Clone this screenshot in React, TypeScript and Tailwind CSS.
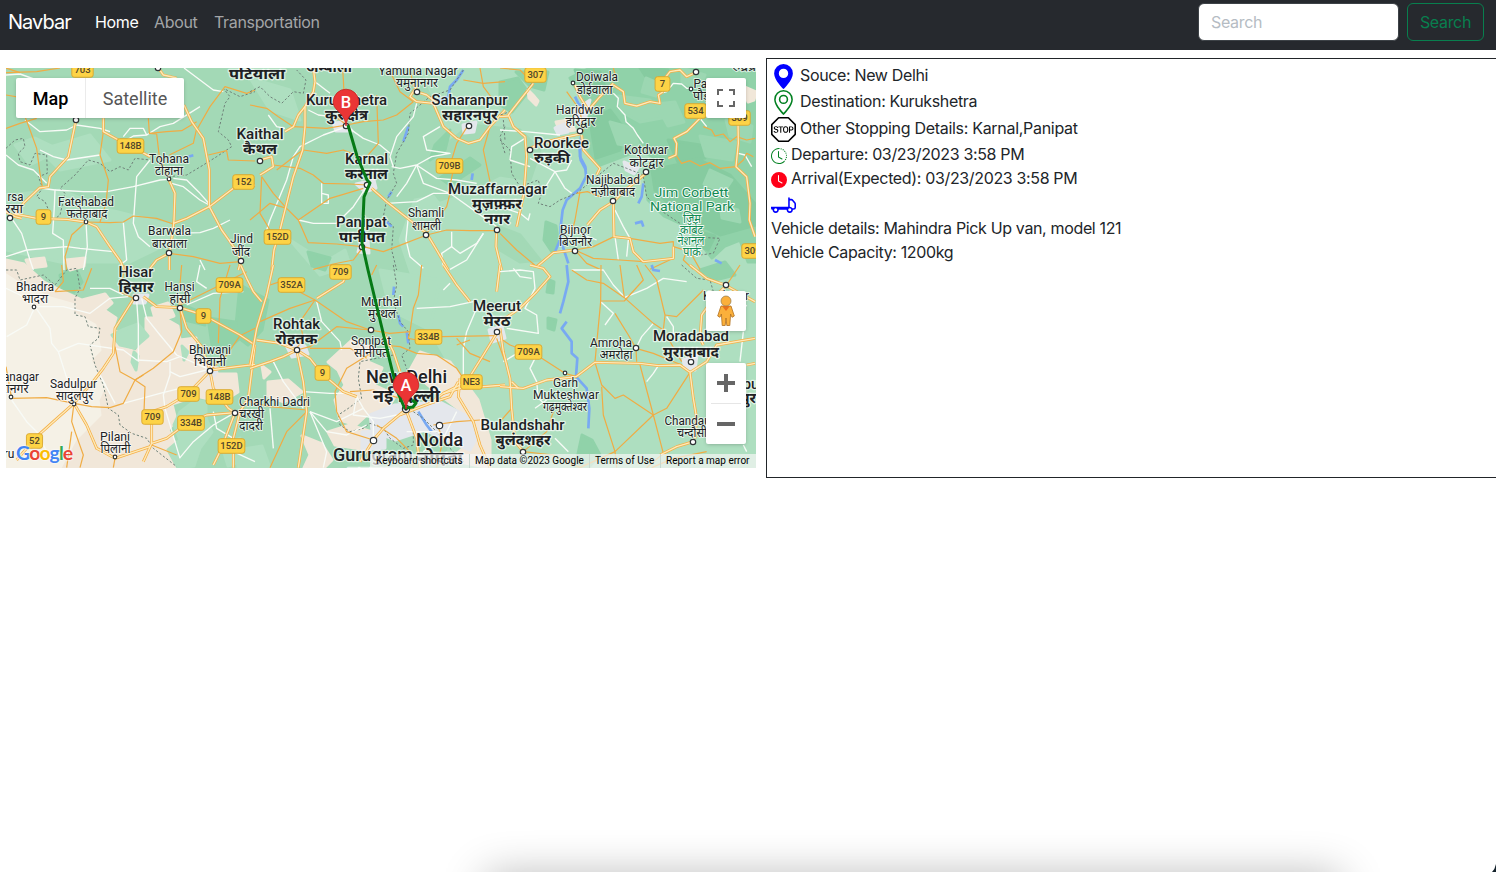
import React from "react";
import { BsClockFill, BsClockHistory, BsGeoAlt, BsGeoAltFill, BsSignStop, BsTruckFlatbed } from "react-icons/bs";

/* ---------- map data ---------- */

type Tile = {
  x: number;
  y: number;
  highways: string[];
  roads: string[];
  lanes: string[];
  borders: string[];
  water: string[];
};

// Each tile is digitised at three units per map pixel.
const tiles: Tile[] = [
  {
    x: 0,
    y: 60,
    highways: [
      "M310 175 L310 215 L355 240 L400 262 L450 290",
      "M505 355 L525 400 L522 480 L518 520 L508 580 L508 630",
      "M552 135 L575 185 L610 235 L628 330 L628 440 L665 510 L715 580 L722 605 L715 630",
      "M628 440 L700 385 L765 375",
      "M628 440 L560 475 L520 490",
      "M228 180 L205 290 L150 350 L145 380 L118 384 L70 430 L45 462 L110 475 L200 478 L258 486",
      "M258 486 L290 500 L330 560 L362 605 L372 630",
      "M18 455 L45 470 L65 475",
      "M508 580 L470 600 L450 625",
      "M475 24 L490 45 L530 54",
    ],
    roads: [
      "M18 105 L60 112 L75 170 L92 215 L110 265 L120 340 L128 384",
      "M18 205 L60 190 L110 175",
      "M310 215 L300 285 L325 360 L318 430 L300 486",
      "M445 175 L448 220 L500 215 L545 212 L590 185",
      "M448 220 L470 222 L478 290 L505 350",
      "M590 210 L630 140 L675 80 L740 100 L765 90",
      "M258 486 L330 488 L370 486 L400 468 L470 475 L520 492",
      "M258 486 L215 525 L195 590 L200 630",
      "M18 38 L110 35 L180 24",
      "M625 285 L680 272 L685 300 L765 303",
      "M508 580 L580 590 L660 610 L722 605",
      "M508 285 L580 250 L590 205 L575 185",
      "M18 24 L60 38",
    ],
    lanes: [
      "M75 180 L120 215 L200 210 L230 195 L300 205 L330 215",
      "M18 285 L55 315 L100 330 L140 370",
      "M120 270 L160 290 L200 300 L300 285",
      "M118 384 L165 390 L163 440 L158 520 L190 540 L192 630",
      "M165 390 L250 395 L320 395 L400 380 L480 360 L505 358",
      "M450 300 L410 350 L405 420 L400 490 L415 530 L450 560",
      "M515 370 L550 380 L600 420 L628 435",
      "M520 355 L560 360 L600 400 L628 432",
      "M18 590 L80 570 L200 560 L240 565 L340 575",
      "M35 475 L65 520 L90 600 L100 630",
      "M370 488 L380 600 L360 615",
      "M522 520 L600 518 L640 505 L690 480",
      "M370 230 L390 205 L430 205 L440 225 L400 228 L380 240",
      "M440 225 L480 200 L520 190 L600 140",
      "M258 486 L262 560 L250 630",
      "M552 24 L600 60 L640 90 L670 95",
      "M18 45 L60 42 L110 60",
      "M600 600 L615 630",
    ],
    borders: [
      "M18 265 L45 240 L70 235 L75 260 L55 280 L60 305 L90 315 L105 280 L140 285 L142 340 L115 350 L128 384 L110 410 L135 425 L150 460",
      "M160 480 L180 465 L195 400 L180 385 L225 345 L265 300 L300 310 L330 335 L360 320 L385 330 L405 295 L450 300",
      "M505 350 L560 345 L610 315 L650 290 L695 260 L685 240 L655 215 L675 130 L690 110 L670 85 L720 110 L765 95",
    ],
    water: ["M565 290 L580 286"],
  },
  {
    x: 250,
    y: 60,
    highways: [
      "M195 65 L190 95 L165 140 L165 200 L158 270 L130 350 L110 430 L90 510 L72 570 L65 630",
      "M165 140 L145 165 L130 200 L105 215",
      "M365 385 L410 425 L460 465 L530 520 L560 570 L595 630",
      "M190 24 L195 65",
      "M500 80 L480 110 L500 125 L550 130 L580 200 L620 235 L655 250 L690 240 L720 200 L765 150",
      "M740 500 L738 560 L755 630",
      "M30 300 L65 290 L70 320 L30 345",
      "M500 95 L530 105 L560 130",
    ],
    roads: [
      "M278 24 L282 95",
      "M290 195 L340 185 L400 180 L440 165 L490 125",
      "M290 195 L270 180 L235 155",
      "M0 135 L50 145 L85 170 L130 200 L230 205 L290 195",
      "M160 270 L230 280 L280 270 L330 290",
      "M70 315 L150 325 L190 345 L220 370 L300 372 L350 375",
      "M35 350 L70 400 L110 445 L145 480 L175 548 L260 552 L335 560",
      "M0 480 L60 430 L110 445",
      "M35 350 L30 460 L60 510",
      "M145 480 L240 415 L340 385",
      "M380 105 L385 250 L350 290",
      "M415 24 L450 95 L490 125",
      "M340 560 L310 600 L250 612 L190 628",
      "M340 560 L400 575 L440 560 L530 525",
      "M530 525 L590 510 L660 512 L740 512",
      "M600 400 L590 440 L560 480 L530 520",
      "M655 195 L620 250 L605 300",
      "M720 200 L700 270 L720 365",
      "M610 330 L595 400",
      "M690 24 L700 80 L730 120",
      "M640 60 L700 70 L765 65",
      "M480 24 L490 80",
      "M158 270 L80 330",
    ],
    lanes: [
      "M175 150 L205 165 L245 170",
      "M290 200 L340 235 L390 255 L420 280",
      "M290 200 L220 225 L150 260 L130 290 L110 360 L60 480 L50 510",
      "M500 130 L490 170 L440 230 L420 290 L430 320",
      "M500 315 L450 325 L425 320",
      "M500 315 L470 370 L440 410",
      "M500 315 L545 290 L600 280 L530 270 L520 230 L570 200",
      "M500 315 L560 355 L620 360 L680 370",
      "M500 315 L520 370 L600 400 L740 500",
      "M350 380 L310 440 L260 490 L190 490 L145 480",
      "M215 370 L215 430 L235 430 L235 405 L215 400",
      "M410 430 L500 425 L550 400 L600 400",
      "M475 470 L468 540 L480 590 L520 625",
      "M605 515 L605 560 L575 580 L580 620",
      "M605 560 L630 580 L680 550 L700 520",
      "M55 165 L80 200 L105 205",
      "M195 65 L240 100",
      "M700 520 L650 600 L600 628",
    ],
    borders: [
      "M0 95 L30 80 L60 110 L95 130 L130 95 L160 100 L168 60 L140 30",
      "M640 30 L600 90 L540 110 L480 160 L475 220 L440 280 L430 340 L440 370 L410 420 L400 470 L430 500 L425 570 L440 630",
      "M765 200 L750 230 L765 280",
    ],
    water: ["M640 30 L620 60 L600 80 L595 110 L540 130", "M475 200 L460 245", "M668 340 L665 360", "M415 410 L425 395", "M410 485 L425 500"],
  },
  {
    x: 500,
    y: 60,
    highways: [
      "M100 70 L60 120 L25 165 L40 200 L75 230 L80 290 L72 400 L50 500",
      "M0 170 L25 168",
      "M225 75 L240 110 L265 150 L300 110 L340 70",
      "M245 225 L250 270 L300 325 L290 345",
      "M92 265 L120 250 L180 235 L240 222",
      "M438 340 L370 395 L340 425 L300 450 L262 495",
      "M340 425 L342 530 L390 535 L400 575 L430 605 L520 595 L520 560",
      "M225 570 L160 578 L110 620",
      "M340 75 L370 95 L375 130 L410 138 L450 125 L480 130 L475 105 L490 95",
      "M505 295 L528 285 L530 250 L522 235 L560 215 L600 175",
      "M714 180 L715 250 L708 320 L740 350 L750 430 L748 480 L765 530",
      "M590 36 L560 50 L540 30 L510 35 L490 60",
    ],
    roads: [
      "M528 285 L545 310 L570 302 L600 318 L630 308 L660 325 L708 320",
      "M610 200 L635 210 L645 228 L670 222 L690 245 L710 230 L740 240 L765 235",
      "M225 570 L280 560 L342 530",
      "M225 570 L280 595 L360 600 L430 605",
      "M225 570 L260 610 L300 628",
      "M230 400 L262 395 L300 410",
      "M240 395 L225 480 L215 520",
      "M390 535 L480 550 L520 545 L520 560 L570 575 L600 628",
      "M520 595 L450 628",
      "M0 520 L50 570 L110 620",
      "M0 24 L60 30 L90 60",
      "M340 24 L350 60",
      "M708 320 L730 300 L740 280 L760 290",
      "M560 570 L550 600 L580 628",
      "M200 95 L240 150 L250 215",
    ],
    lanes: [
      "M340 100 L355 115 L352 140 L375 165 L378 185 L400 205 L412 225 L430 250",
      "M0 210 L75 215 L180 225",
      "M30 300 L35 260 L75 235",
      "M30 300 L90 320",
      "M90 295 L165 335 L200 330 L215 300",
      "M165 335 L140 375 L125 400",
      "M165 335 L195 385 L215 400",
      "M345 450 L370 500 L390 535",
      "M345 530 L355 600",
      "M480 100 L500 95 L520 70 L545 72 L560 85 L575 85",
      "M600 175 L620 200",
      "M715 280 L735 285 L755 320",
      "M0 440 L60 460 L85 480 L90 460",
      "M385 540 L380 590",
      "M180 495 L290 540",
    ],
    borders: [
      "M95 70 L60 120 L30 155 L0 165",
      "M0 240 L30 270 L35 340 L60 380 L115 360 L125 400 L115 430 L150 440 L180 420 L230 400 L290 350 L340 310 L380 325 L430 345",
      "M430 350 L440 410 L480 450 L540 490 L560 530 L660 535 L640 580 L560 590",
      "M10 180 L15 240",
    ],
    water: [
      "M225 110 L235 130 L250 145",
      "M243 230 L240 290 L256 320 L258 350 L240 385 L200 420 L188 450 L182 500 L182 540 L205 610",
      "M236 240 L242 300 L258 330",
      "M180 540 L165 575",
      "M430 370 L425 410 L415 430",
      "M405 490 L425 485 L430 500",
      "M505 430 L515 435",
      "M645 600 L665 610",
    ],
  },
  {
    x: 0,
    y: 265,
    highways: [
      "M408 90 L370 150 L345 190 L340 265 L310 310 L275 355 L222 415",
      "M222 415 L160 470 L110 515 L50 585",
      "M222 415 L260 480 L290 550 L345 580 L450 545",
      "M430 95 L470 125 L540 128 L610 150 L720 210 L765 240",
      "M540 128 L560 190 L605 245 L630 315 L765 298",
      "M630 318 L565 385 L500 425 L455 440",
      "M630 318 L640 370 L685 430 L705 443",
      "M455 440 L455 535 L430 590",
      "M455 535 L500 520 L560 475 L620 450 L705 443",
      "M765 240 L745 400 L720 440 L700 520 L700 608",
      "M705 443 L660 560 L640 600",
      "M540 95 L540 128",
      "M722 0 L740 40 L760 80 L785 110",
    ],
    roads: [
      "M33 400 L140 398 L222 415",
      "M18 305 L35 400",
      "M222 415 L275 425 L330 428 L370 415 L405 345 L430 330",
      "M345 245 L360 320 L405 345 L435 365 L432 440",
      "M540 130 L545 200 L520 260 L460 310 L405 345",
      "M720 212 L680 270 L632 315",
      "M720 212 L765 190",
      "M655 235 L660 100 L690 0",
      "M222 415 L215 470 L225 500 L250 570 L240 608",
      "M215 500 L200 608",
      "M375 0 L360 80 L400 100",
      "M165 80 L250 75 L275 10",
      "M165 80 L190 50 L185 0",
      "M455 540 L530 570",
      "M345 580 L340 608",
      "M540 120 L620 80 L740 20",
      "M545 0 L540 60",
    ],
    lanes: [
      "M105 125 L80 180 L20 215",
      "M105 125 L190 125 L270 145 L330 100 L385 95",
      "M105 125 L150 190 L155 235 L175 260 L210 370 L222 415",
      "M175 260 L235 235 L300 245 L370 255 L410 285 L500 290 L540 275",
      "M410 105 L415 180 L415 290",
      "M425 100 L440 160 L480 210 L530 270 L620 310",
      "M510 290 L510 330 L490 390 L495 430",
      "M510 320 L540 335 L620 315",
      "M300 330 L345 415",
      "M370 415 L480 385 L540 370",
      "M35 405 L80 470 L110 500 L155 590",
      "M495 430 L540 580",
      "M705 443 L640 480 L580 530 L540 578",
      "M640 440 L650 490 L700 520",
      "M18 70 L60 90 L100 120",
      "M270 70 L330 70 L370 90",
      "M560 120 L640 85 L730 80",
      "M600 0 L590 50 L620 70",
      "M700 560 L765 590",
    ],
    borders: [
      "M18 15 L50 15 L60 45 L130 30 L165 60 L200 15 L230 10 L240 70 L225 100 L225 150 L255 155 L265 185 L300 190 L295 220 L270 240 L285 300 L310 360 L325 430 L355 450 L360 480 L395 505 L440 520 L460 550 L530 605",
    ],
    water: [],
  },
  {
    x: 250,
    y: 265,
    highways: [
      "M70 0 L50 90 L20 190 L0 300",
      "M300 0 L280 50 L240 75 L200 100",
      "M140 255 L180 280 L215 325 L280 380 L320 395",
      "M140 255 L100 275 L60 290 L0 310",
      "M140 255 L90 235 L20 225",
      "M140 255 L160 350 L170 440 L145 608",
      "M450 450 L500 430 L540 415 L580 385 L630 370 L765 360",
      "M580 385 L650 350 L700 270 L740 205",
      "M460 440 L400 490 L370 525 L330 590",
      "M580 0 L620 60 L660 110",
      "M630 340 L625 395 L670 470 L690 540 L720 608",
      "M400 200 L430 260 L450 320",
      "M470 440 L500 520 L510 608",
      "M750 0 L740 80",
      "M540 415 L600 395 L625 350",
    ],
    roads: [
      "M195 105 L90 50 L60 60",
      "M195 105 L150 170 L160 220 L140 250",
      "M195 105 L290 170 L360 195",
      "M140 255 L180 245 L260 185 L360 195",
      "M360 195 L420 205 L480 200 L475 220 L500 225",
      "M575 215 L740 212",
      "M515 0 L505 90 L490 130 L480 200",
      "M400 240 L450 245 L500 265 L560 270 L620 310 L640 340",
      "M620 220 L660 265 L720 290",
      "M660 225 L620 240",
      "M370 260 L290 310 L255 380 L260 440 L290 500 L370 525",
      "M30 170 L120 130 L195 105",
      "M300 380 L370 375 L450 400",
      "M170 440 L110 500 L60 608",
      "M350 280 L300 250 L180 250",
      "M550 480 L620 470 L690 465",
      "M380 0 L365 30",
      "M740 220 L765 290",
      "M560 608 L580 520 L560 480",
      "M380 480 L440 520 L480 560 L490 608",
      "M170 435 L60 425 L0 410",
    ],
    lanes: [
      "M200 110 L215 170 L270 230 L275 255",
      "M500 130 L600 125 L670 110",
      "M680 130 L650 200 L640 250 L640 340",
      "M320 395 L340 430 L260 470 L180 440",
      "M180 440 L230 500 L290 510 L350 480",
      "M160 380 L240 385 L310 385",
      "M60 430 L70 550",
      "M180 440 L230 560 L220 608",
      "M320 395 L310 450 L390 460 L440 450",
      "M580 75 L600 55",
      "M70 290 L100 350 L160 430",
      "M340 430 L370 470 L370 525",
      "M470 500 L560 500 L640 540",
      "M620 440 L600 480 L580 520 L520 560",
      "M490 400 L540 390 L570 370",
    ],
    borders: [
      "M430 0 L440 60 L430 110 L450 170 L475 200 L480 250 L455 270 L470 310 L490 360",
      "M430 270 L330 290 L325 340 L335 400 L295 430 L265 450 L270 480 L300 500 L340 490 L360 475 L400 490 L420 520 L460 550 L490 540 L490 490",
      "M490 440 L520 460 L560 500 L600 550 L640 590",
    ],
    water: ["M432 65 L430 90", "M445 150 L450 175 L460 185", "M470 200 L475 235", "M505 440 L530 480 L545 500"],
  },
  {
    x: 500,
    y: 265,
    highways: [
      "M0 190 L10 260 L30 340 L35 430 L45 530 L70 560",
      "M0 365 L70 370 L140 345 L228 335 L285 292 L420 295 L475 302 L540 300 L570 322",
      "M570 322 L620 290 L650 240 L765 220",
      "M570 322 L580 400 L590 460 L585 520",
      "M0 170 L60 130 L110 80 L150 35 L130 10 L90 0",
      "M680 60 L640 100 L605 150 L600 220 L610 240",
      "M580 530 L530 545 L480 570",
      "M570 0 L620 40 L675 60 L765 110",
      "M35 350 L55 370",
      "M740 300 L765 295",
    ],
    roads: [
      "M215 15 L260 45 L310 55 L373 98 L460 175 L490 195 L545 290",
      "M303 0 L302 110 L285 290",
      "M302 108 L373 108 L430 45 L410 0",
      "M373 98 L360 0",
      "M435 0 L470 45 L495 150 L490 195",
      "M495 150 L530 155 L610 75",
      "M345 145 L385 210 L408 250 L410 290",
      "M408 250 L460 265 L545 300",
      "M285 292 L305 360 L345 400 L370 390 L460 450 L500 430 L568 325",
      "M420 300 L460 450 L490 565",
      "M305 365 L310 450 L345 560 L460 450",
      "M345 560 L240 608",
      "M345 560 L350 608",
      "M30 240 L110 270 L195 325",
      "M160 440 L140 500 L70 560",
      "M70 560 L160 570 L240 608",
      "M490 565 L440 608",
      "M680 60 L720 0",
      "M195 325 L230 335",
      "M0 470 L35 430",
      "M0 220 L30 240",
      "M455 608 L520 580 L620 560",
    ],
    lanes: [
      "M0 20 L60 15 L100 20 L105 70 L75 130 L110 150 L115 205 L20 190",
      "M40 10 L60 35 L95 40",
      "M215 15 L310 15 L340 60 L375 98",
      "M373 98 L440 70 L490 40 L560 50",
      "M302 110 L340 145 L315 180",
      "M408 250 L425 215 L460 175",
      "M105 280 L90 310 L110 350 L115 400 L160 440",
      "M475 302 L460 325 L440 350",
      "M500 155 L520 185 L520 215",
      "M165 520 L205 560",
      "M730 200 L720 290",
      "M730 540 L740 560",
      "M10 290 L60 260",
      "M620 100 L700 100",
      "M740 120 L700 180",
      "M105 430 L140 405",
    ],
    borders: ["M545 0 L590 40 L630 45 L640 80"],
    water: [
      "M200 0 L205 50 L190 110 L180 145",
      "M200 170 L185 190 L215 230 L215 265 L232 280 L228 335 L260 370 L268 430 L265 490",
      "M455 0 L460 15 L480 18",
    ],
  },
];

const shields: [string, number, number][] = [
  ["703", 82.5, 70], ["148B", 130.5, 146], ["152", 243.5, 182], ["9", 43.5, 217], ["152D", 277.5, 237],
  ["709", 340.5, 272], ["709A", 229.5, 285], ["352A", 291.5, 285], ["9", 203.5, 316], ["709B", 449.5, 166],
  ["307", 535.5, 75], ["7", 662.5, 84], ["534", 695.5, 111], ["309", 739.5, 118], ["309", 752.5, 251],
  ["334B", 428.5, 337], ["709A", 528.5, 352], ["NE3", 471.5, 382], ["9", 322.5, 373], ["709", 188.5, 394],
  ["148B", 219.5, 397], ["709", 152.5, 417], ["334B", 191, 423], ["152D", 231.5, 446], ["52", 34.5, 441],
];

type MapLabel = { t: string; x: number; y: number; s: number; b?: boolean; hi?: boolean; w?: number };

const labels: MapLabel[] = [
  { t: "पटियाला", x: 257, y: 79, s: 15, b: true, hi: true, w: 56 },
  { t: "अम्बाला", x: 329, y: 72, s: 15, b: true, hi: true, w: 46 },
  { t: "Kurukshetra", x: 346.5, y: 104.5, s: 14, b: true, w: 81 },
  { t: "कुरुक्षेत्र", x: 346.5, y: 120, s: 15, b: true, hi: true, w: 43 },
  { t: "Yamuna Nagar", x: 418, y: 74.5, s: 12, w: 79 },
  { t: "यमुनानगर", x: 417, y: 87, s: 13, hi: true, w: 42 },
  { t: "Saharanpur", x: 469.5, y: 105, s: 14, b: true, w: 76 },
  { t: "सहारनपुर", x: 470, y: 120, s: 15, b: true, hi: true, w: 56 },
  { t: "Kaithal", x: 260, y: 139, s: 14, b: true, w: 47 },
  { t: "कैथल", x: 260, y: 154, s: 15, b: true, hi: true, w: 34 },
  { t: "Karnal", x: 366.5, y: 164, s: 14, b: true, w: 43 },
  { t: "करनाल", x: 366.5, y: 179, s: 15, b: true, hi: true, w: 43 },
  { t: "Tohana", x: 169, y: 162.5, s: 12, w: 40 },
  { t: "टोहाना", x: 169, y: 175, s: 13, hi: true, w: 28 },
  { t: "Fatehabad", x: 86, y: 205.5, s: 12, w: 56 },
  { t: "फतेहाबाद", x: 87, y: 218, s: 13, hi: true, w: 41 },
  { t: "rsa", x: 15.5, y: 200.5, s: 12, w: 16 },
  { t: "रसा", x: 14, y: 213, s: 13, hi: true, w: 18 },
  { t: "Barwala", x: 169.5, y: 235, s: 12, w: 43 },
  { t: "बारवाला", x: 169.5, y: 248, s: 13, hi: true, w: 35 },
  { t: "Jind", x: 241.5, y: 243, s: 12, w: 23 },
  { t: "जींद", x: 241, y: 255.5, s: 13, hi: true, w: 18 },
  { t: "Shamli", x: 426, y: 217, s: 12, w: 36 },
  { t: "शामली", x: 426.5, y: 229.5, s: 13, hi: true, w: 29 },
  { t: "Panipat", x: 361.5, y: 226.5, s: 14, b: true, w: 51 },
  { t: "पानीपत", x: 362, y: 241.5, s: 15, b: true, hi: true, w: 46 },
  { t: "Muzaffarnagar", x: 497.5, y: 194, s: 14, b: true, w: 99 },
  { t: "मुज़फ़्फ़र", x: 497, y: 209, s: 15, b: true, hi: true, w: 50 },
  { t: "नगर", x: 497, y: 224, s: 15, b: true, hi: true, w: 26 },
  { t: "Doiwala", x: 597, y: 81, s: 12, w: 42 },
  { t: "डोईवाला", x: 594.5, y: 93.5, s: 13, hi: true, w: 36 },
  { t: "Haridwar", x: 580, y: 113.5, s: 12, w: 48 },
  { t: "हरिद्वार", x: 580.5, y: 126, s: 13, hi: true, w: 30 },
  { t: "Roorkee", x: 561.5, y: 148, s: 14, b: true, w: 55 },
  { t: "रुड़की", x: 552, y: 163, s: 15, b: true, hi: true, w: 36 },
  { t: "Kotdwar", x: 646, y: 154, s: 12, w: 44 },
  { t: "कोटद्वार", x: 646.5, y: 166.5, s: 13, hi: true, w: 34 },
  { t: "Najibabad", x: 613, y: 183.5, s: 12, w: 54 },
  { t: "नज़ीबाबाद", x: 613, y: 196, s: 13, hi: true, w: 44 },
  { t: "Bijnor", x: 575.5, y: 233.5, s: 12, w: 31 },
  { t: "बिजनौर", x: 575.5, y: 246, s: 13, hi: true, w: 33 },
  { t: "Pauri", x: 707, y: 88, s: 12, w: 27 },
  { t: "पौड़ी", x: 703, y: 99.5, s: 13, hi: true, w: 20 },
  { t: "रुद्रप्र", x: 744, y: 71, s: 11, hi: true, w: 24 },
  { t: "Hisar", x: 136, y: 276.5, s: 14, b: true, w: 35 },
  { t: "हिसार", x: 136, y: 291.5, s: 15, b: true, hi: true, w: 35 },
  { t: "Hansi", x: 179.5, y: 290.5, s: 12, w: 30 },
  { t: "हांसी", x: 180, y: 302.5, s: 13, hi: true, w: 21 },
  { t: "Bhadra", x: 35, y: 290.5, s: 12, w: 38 },
  { t: "भादरा", x: 35, y: 302.5, s: 13, hi: true, w: 26 },
  { t: "Bhiwani", x: 210, y: 353.5, s: 12, w: 42 },
  { t: "भिवानी", x: 210, y: 365.5, s: 13, hi: true, w: 32 },
  { t: "anagar", x: 21, y: 380.5, s: 12, w: 36 },
  { t: "रानगर", x: 15, y: 393, s: 13, hi: true, w: 27 },
  { t: "Sadulpur", x: 73.5, y: 387.5, s: 12, w: 47 },
  { t: "सादुलपुर", x: 74.5, y: 399.5, s: 13, hi: true, w: 37 },
  { t: "Pilani", x: 115, y: 440.5, s: 12, w: 30 },
  { t: "पिलानी", x: 115.5, y: 452.5, s: 13, hi: true, w: 30 },
  { t: "ru", x: 9, y: 457.5, s: 12 },
  { t: "Rohtak", x: 296.5, y: 329, s: 14, b: true, w: 47 },
  { t: "रोहतक", x: 296.5, y: 344, s: 15, b: true, hi: true, w: 42 },
  { t: "Murthal", x: 381.5, y: 305.5, s: 12, w: 41 },
  { t: "मुरथल", x: 382, y: 317.5, s: 13, hi: true, w: 28 },
  { t: "Sonipat", x: 371, y: 344.5, s: 12, w: 40 },
  { t: "सोनीपत", x: 371.5, y: 356.5, s: 13, hi: true, w: 35 },
  { t: "Charkhi Dadri", x: 274.5, y: 405.5, s: 12, w: 71 },
  { t: "चरखी", x: 251.5, y: 417.5, s: 13, hi: true, w: 25 },
  { t: "दादरी", x: 251, y: 429.5, s: 13, hi: true, w: 24 },
  { t: "New Delhi", x: 406.5, y: 383, s: 18, b: true, w: 81 },
  { t: "नई दिल्ली", x: 406.5, y: 401.5, s: 18, b: true, hi: true, w: 67 },
  { t: "Noida", x: 439.5, y: 445.5, s: 18, b: true, w: 47 },
  { t: "नोएडा", x: 440, y: 464, s: 18, b: true, hi: true, w: 46 },
  { t: "Gurugram", x: 373, y: 460.5, s: 18, b: true, w: 80 },
  { t: "गुरुग्राम", x: 373, y: 479, s: 18, b: true, hi: true, w: 50 },
  { t: "Meerut", x: 497, y: 310.5, s: 14, b: true, w: 48 },
  { t: "मेरठ", x: 497, y: 325.5, s: 15, b: true, hi: true, w: 27 },
  { t: "Amroha", x: 611, y: 346.5, s: 12, w: 42 },
  { t: "अमरोहा", x: 616, y: 358.5, s: 13, hi: true, w: 33 },
  { t: "Moradabad", x: 691, y: 341, s: 14, b: true, w: 76 },
  { t: "मुरादाबाद", x: 691, y: 356.5, s: 15, b: true, hi: true, w: 56 },
  { t: "Garh", x: 565.5, y: 386.5, s: 12, w: 25 },
  { t: "Mukteshwar", x: 566, y: 398.5, s: 12, w: 66 },
  { t: "गढ़मुक्तेश्वर", x: 565, y: 411, s: 13, hi: true, w: 44 },
  { t: "Bulandshahr", x: 522.5, y: 430, s: 14, b: true, w: 84 },
  { t: "बुलंदशहर", x: 523, y: 445, s: 15, b: true, hi: true, w: 55 },
  { t: "Chandausi", x: 692, y: 424.5, s: 12, w: 55 },
  { t: "चन्दौसी", x: 692, y: 437, s: 13, hi: true, w: 30 },
  { t: "Kashipur", x: 726, y: 299.5, s: 12, w: 46 },
  { t: "Rampur", x: 739, y: 388.5, s: 14, b: true, w: 50 },
  { t: "रामपुर", x: 738, y: 403, s: 15, b: true, hi: true, w: 36 },
];

const parkLabels: MapLabel[] = [
  { t: "Jim Corbett", x: 691.5, y: 196.5, s: 13.5, w: 74 },
  { t: "National Park", x: 692, y: 210.5, s: 13.5, w: 84 },
  { t: "जिम", x: 692, y: 223, s: 12.5, hi: true, w: 18 },
  { t: "कॉर्बेट", x: 691.5, y: 234, s: 12.5, hi: true, w: 23 },
  { t: "नेशनल", x: 691, y: 245, s: 12.5, hi: true, w: 27 },
  { t: "पार्क", x: 692, y: 256, s: 12.5, hi: true, w: 18 },
];

const towns: [number, number, number][] = [
  [76, 120, 2.7], [158, 68, 2.7], [169, 179, 1.8], [10, 218, 2.7], [86, 222, 1.8], [169, 253, 2.7], [241, 261, 2.7],
  [260, 161, 2.7], [346, 126, 2.7], [367, 185, 2.7], [417, 92, 2.7], [469, 126, 2.7], [426, 235, 2.7], [362, 247, 2.7],
  [497, 230, 2.7], [573, 83, 1.8], [580, 131, 2.7], [530, 150, 2.7], [646, 172, 2.7], [613, 201, 2.7], [575, 251, 2.7],
  [696, 72, 2.7], [691, 89, 1.8], [136, 298, 2.7], [180, 308, 2.7], [34, 307, 1.8], [210, 371, 2.7], [74, 404, 1.8],
  [11, 397, 1.8], [115, 457, 1.8], [235, 413, 2.7], [297, 350, 2.7], [371, 330, 2.7], [373.5, 440.5, 3.2], [439.5, 425.5, 3.2],
  [497, 332, 2.7], [636, 348, 2.7], [691, 362, 2.7], [565, 373, 1.8], [523, 452, 2.7], [693, 442, 2.7], [726, 285, 2.7],
  [406, 409, 3.6],
];

const lightGreen = [
  "M6 195 L60 190 L110 210 L170 225 L175 240 L130 262 L60 262 L6 250 Z",
  "M420 68 L760 68 L760 470 L440 470 L470 400 L430 330 L400 240 L415 200 L470 190 L455 150 L440 110 Z",
  "M250 78 L290 90 L300 120 L270 110 Z",
  "M40 150 L90 135 L110 160 L60 170 Z",
  "M15 145 L35 138 L60 150 L30 165 Z",
  "M290 240 L325 262 L345 250 L350 265 L320 275 Z",
  "M380 270 L440 280 L430 330 L390 310 Z",
];

const darkerGreen = [
  "M425 180 L440 150 L470 125 L520 130 L540 150 L530 180 L500 175 L470 190 L440 200 Z",
  "M495 225 L520 235 L540 260 L520 262 L500 250 Z",
];

const forest = [
  "M590 68 L756 68 L756 262 L748 262 L740 240 L725 246 L712 258 L704 248 L690 228 L664 216 L648 200 L645 178 L655 158 L640 150 L600 165 L588 150 L582 130 L592 112 L580 96 L570 78 Z",
  "M430 160 L445 150 L450 130 L435 145 Z",
  "M440 178 L470 158 L480 165 L450 185 Z",
  "M500 82 L518 78 L528 92 L512 112 L500 105 Z",
  "M516 72 L548 72 L544 90 L530 86 Z",
  "M240 285 L268 300 L262 330 L248 345 L235 335 Z",
  "M208 318 L235 322 L240 338 L225 352 L212 345 Z",
  "M175 302 L200 312 L205 325 L185 320 Z",
  "M60 275 L76 268 L82 282 L74 292 L62 288 Z",
  "M308 252 L330 258 L325 270 L312 266 Z",
  "M700 270 L725 262 L735 275 L715 280 Z",
  "M582 435 L592 440 L600 455 L588 468 L575 468 Z",
  "M546 222 L556 226 L558 240 L552 252 L544 240 Z",
  "M549 280 L554 282 L553 293 L547 292 Z",
  "M548 318 L556 320 L554 330 L548 328 Z",
];

const forestShade = [
  "M652 170 L700 160 L730 175 L756 205 L756 225 L720 235 L700 225 L670 205 L655 190 Z",
  "M590 120 L610 110 L625 130 L620 150 L596 158 Z",
  "M668 140 L700 145 L705 158 L678 162 Z",
  "M575 70 L600 72 L605 88 L585 92 Z",
  "M640 68 L668 70 L664 84 L648 80 Z",
  "M692 230 L715 236 L708 250 L696 244 Z",
];

const forestLight = [
  "M618 96 L650 100 L662 118 L640 122 L622 112 Z",
  "M610 122 L632 128 L640 148 L618 144 Z",
  "M656 104 L675 102 L684 122 L668 126 Z",
  "M700 136 L736 142 L732 160 L706 156 Z",
  "M646 78 L660 84 L656 96 L642 92 Z",
  "M710 170 L732 180 L724 192 L704 184 Z",
  "M682 68 L705 75 L700 90 L682 82 Z",
  "M726 120 L752 126 L750 142 L730 136 Z",
  "M720 205 L738 210 L740 222 L722 218 Z",
];

const sand = [
  "M6 260 L24 264 L44 282 L60 290 L82 300 L105 294 L112 303 L104 310 L116 318 L112 330 L124 335 L118 346 L136 352 L146 338 L146 318 L164 318 L178 326 L180 340 L196 338 L192 352 L204 362 L218 374 L236 374 L238 392 L222 402 L196 396 L172 404 L176 420 L168 430 L176 445 L168 456 L178 468 L6 468 Z",
  "M152 308 L168 303 L174 316 L156 322 Z",
  "M352 340 L372 348 L368 362 L382 368 L374 385 L396 395 L388 408 L370 412 L356 425 L340 420 L335 400 L345 385 L338 370 L328 362 Z",
  "M328 432 L350 425 L372 432 L368 450 L335 445 Z",
  "M420 352 L450 362 L478 400 L490 440 L490 468 L450 460 L472 440 L460 410 L440 395 L410 370 Z",
  "M268 382 L288 380 L302 392 L284 402 L268 396 Z",
  "M302 436 L322 444 L332 460 L324 468 L304 468 L310 455 Z",
  "M528 90 L533 95 L538 101 L536 105 L529 98 Z",
  "M556 122 L568 120 L575 130 L560 132 Z",
  "M742 86 L756 92 L754 100 L748 102 Z",
  "M26 260 L44 258 L46 266 L30 268 Z",
  "M66 260 L85 258 L84 266 L70 270 Z",
  "M262 366 L270 372 L264 378 Z",
];

const paleSand = [
  "M6 275 L20 284 L50 298 L75 305 L72 312 L95 325 L100 350 L90 360 L105 385 L98 400 L100 415 L75 440 L60 468 L6 468 Z",
];

const greenIslands = [
  "M112 335 L122 330 L138 324 L148 336 L134 348 L120 345 Z",
  "M134 352 L138 356 L136 370 L132 362 Z",
  "M180 412 L196 400 L206 402 L206 418 L212 432 L200 448 L194 466 L178 468 L168 450 L180 440 L174 425 Z",
  "M222 446 L240 438 L244 460 L228 466 Z",
  "M182 346 L188 352 L184 360 Z",
  "M236 450 L262 446 L270 468 L238 468 Z",
];

const urban = [
  "M370 415 L395 405 L440 402 L465 415 L478 435 L470 450 L445 440 L425 430 L395 440 L372 430 Z",
  "M333 123 L345 122 L352 131 L336 131 Z",
  "M356 184 L374 180 L376 188 L365 192 Z",
  "M361 240 L368 240 L369 253 L358 252 Z",
  "M463 125 L476 122 L474 132 L464 133 Z",
  "M555 128 L565 124 L568 132 L558 134 Z",
  "M286 345 L305 346 L308 354 L292 357 Z",
  "M134 295 L148 295 L145 303 L134 303 Z",
  "M489 330 L502 326 L505 338 L492 342 Z",
  "M683 360 L697 355 L695 370 L685 368 Z",
  "M362 432 L385 430 L385 448 L362 450 Z",
  "M575 110 L590 100 L585 120 L578 122 Z",
  "M624 162 L638 168 L634 174 L626 170 Z",
  "M208 366 L218 368 L214 376 L206 376 Z",
];

const route = "M348 125 L357 156 L367 180 L370 183 L364 197 L363 220 L362 243 L368 270 L380 320 L392 370 L398 393 L405 409 M406 408 L413 407 L416 403 L412 400";

function Shapes({ paths, fill }: { paths: string[]; fill: string }) {
  return (
    <g fill={fill} stroke={fill} strokeWidth="3" strokeLinejoin="round">
      {paths.map((d) => (
        <path key={d} d={d} />
      ))}
    </g>
  );
}

function Strokes({ paths, color, width, dash }: { paths: string[]; color: string; width: number; dash?: string }) {
  return (
    <g fill="none" stroke={color} strokeWidth={width} strokeLinejoin="round" strokeDasharray={dash}>
      {paths.map((d) => (
        <path key={d} d={d} />
      ))}
    </g>
  );
}

function weightOf(label: MapLabel) {
  if (!label.b) return 400;
  return label.hi ? 700 : 500;
}

function Labels({ items, fill, halo = 0.65 }: { items: MapLabel[]; fill: string; halo?: number }) {
  return (
    <g textAnchor="middle" fill={fill} stroke="#ffffff" strokeOpacity={halo} strokeLinejoin="round" paintOrder="stroke">
      {items.map((l) => (
        <text
          key={l.t + l.x}
          x={l.x}
          y={l.y}
          fontSize={l.s}
          fontWeight={weightOf(l)}
          strokeWidth={l.b ? 2.4 : 2}
          textLength={l.w}
          lengthAdjust="spacingAndGlyphs"
        >
          {l.t}
        </text>
      ))}
    </g>
  );
}

function Marker({ x, y, letter }: { x: number; y: number; letter: string }) {
  return (
    <g transform={`translate(${x} ${y})`}>
      <path
        d="M0 0 C-1 -8 -4 -11 -8.5 -15.5 C-11 -18 -12.8 -20.5 -12.8 -24 A12.8 12.8 0 0 1 12.8 -24 C12.8 -20.5 11 -18 8.5 -15.5 C4 -11 1 -8 0 0 Z"
        fill="#ea3535"
        stroke="#c5221f"
        strokeWidth="0.8"
      />
      <text y="-18.3" textAnchor="middle" fontSize="16.5" fontWeight="500" fill="#ffffff">
        {letter}
      </text>
    </g>
  );
}

function MapCanvas() {
  return (
    <svg viewBox="6 68 750 400" className="block h-[400px] w-[750px] font-[Roboto,'Noto_Sans',sans-serif]">
      <rect x="6" y="68" width="750" height="400" fill="#a3d9b6" />
      <Shapes paths={lightGreen} fill="#aedfc0" />
      <Shapes paths={darkerGreen} fill="#a3d9b6" />
      <Shapes paths={forest} fill="#90d2a9" />
      <Shapes paths={forestShade} fill="#86cba0" />
      <Shapes paths={forestLight} fill="#9cd7b2" />
      <Shapes paths={sand} fill="#f1e7d9" />
      <Shapes paths={paleSand} fill="#f5f1e6" />
      <Shapes paths={greenIslands} fill="#aedfc0" />
      <Shapes paths={urban} fill="#e4e7ec" />
      {tiles.map((t) => (
        <g key={`${t.x}-${t.y}`} transform={`translate(${t.x} ${t.y}) scale(0.33333)`}>
          <Strokes paths={t.water} color="#78a9f2" width={8} />
          <Strokes paths={t.borders} color="#6f8279" width={3} dash="7 6" />
          <Strokes paths={t.lanes} color="#f8fbf7" width={4} />
          <Strokes paths={t.roads} color="#f0ac44" width={3.6} />
          <Strokes paths={t.highways} color="#f5b046" width={8.4} />
          <Strokes paths={t.highways} color="#fdeabb" width={4} />
        </g>
      ))}
      {shields.map(([name, x, y]) => {
        const w = name.length * 5.3 + (name.length === 1 ? 9.5 : 5.5);
        return (
          <g key={`${name}-${x}`}>
            <rect x={x - w / 2} y={y - 7.3} width={w} height="14.6" rx="2.5" fill="#fdd346" stroke="#d9a62b" strokeWidth="0.9" />
            <text x={x} y={y + 3.4} textAnchor="middle" fontSize="9.5" fontWeight="500" fill="#50452a">
              {name}
            </text>
          </g>
        );
      })}
      <g fill="#ffffff" stroke="#2f3336" strokeWidth="1.2">
        {towns.map(([x, y, r]) => (
          <circle key={`${x}-${y}`} cx={x} cy={y} r={r} />
        ))}
      </g>
      <circle cx="406" cy="409" r="1.8" fill="#202124" />
      <Labels items={labels} fill="#202124" />
      <Labels items={parkLabels} fill="#128a52" halo={0.9} />
      <path d={route} fill="none" stroke="#067a16" strokeWidth="3" strokeLinejoin="round" />
      <Marker x={346} y={126} letter="B" />
      <Marker x={406} y={409} letter="A" />
    </svg>
  );
}

/* ---------- map controls ---------- */

function Pegman() {
  return (
    <svg viewBox="0 0 20 32" className="h-8 w-5">
      <path
        d="M5 11 H15 L18.3 21 L16 22.3 L14.6 19 L13.8 30.5 H10.8 L10 23 L9.2 30.5 H6.2 L5.4 19 L4 22.3 L1.7 21 Z"
        fill="#fbb03b"
        stroke="#b06f1d"
        strokeWidth="0.8"
      />
      <path d="M6 11 L10 16 L14 11 Z" fill="#e8711c" />
      <circle cx="10" cy="6" r="5" fill="#fbb03b" stroke="#8f7a4f" strokeWidth="0.7" />
    </svg>
  );
}

function RouteMap() {
  return (
    <section className="relative h-[400px] w-[750px] overflow-hidden font-[Roboto,sans-serif]">
      <MapCanvas />
      <div className="absolute left-[10px] top-[10px] flex h-10 w-[168px] items-center rounded-[2px] bg-white text-[18px] shadow-[0_1px_4px_-1px_rgba(0,0,0,0.3)]">
        <button className="h-full w-[70px] border-r border-[#ebebeb] pt-[2px] font-medium text-black">Map</button>
        <button className="h-full flex-1 pt-[2px] text-[#565656]">Satellite</button>
      </div>
      <button className="absolute right-[10px] top-[10px] flex size-10 items-center justify-center rounded-[2px] bg-white shadow-[0_1px_4px_-1px_rgba(0,0,0,0.3)]">
        <svg viewBox="0 0 18 18" className="size-[18px]" fill="none" stroke="#666666" strokeWidth="2">
          <path d="M1 6 V1 H6 M12 1 H17 V6 M17 12 V17 H12 M6 17 H1 V12" />
        </svg>
      </button>
      <button className="absolute right-[10px] top-[223px] flex size-10 items-center justify-center rounded-[2px] bg-white shadow-[0_1px_4px_-1px_rgba(0,0,0,0.3)]">
        <Pegman />
      </button>
      <div className="absolute right-[10px] top-[295px] flex h-[81px] w-10 flex-col items-center rounded-[2px] bg-white shadow-[0_1px_4px_-1px_rgba(0,0,0,0.3)]">
        <button className="flex h-10 w-full items-center justify-center">
          <svg viewBox="0 0 18 18" className="size-[18px]" fill="#666666">
            <path d="M7 0 H11 V7 H18 V11 H11 V18 H7 V11 H0 V7 H7 Z" />
          </svg>
        </button>
        <span className="h-px w-[30px] bg-[#e6e6e6]" />
        <button className="flex h-10 w-full items-center justify-center">
          <svg viewBox="0 0 18 18" className="size-[18px]" fill="#666666">
            <path d="M0 7 H18 V11 H0 Z" />
          </svg>
        </button>
      </div>
      <div className="absolute bottom-[2px] left-[10px] flex text-[19.5px] leading-[26px] tracking-[-1px] font-[Lato,sans-serif] font-bold [text-shadow:0_0_2px_white,0_0_2px_white]">
        <span className="text-[#4285f4]">G</span>
        <span className="text-[#ea4335]">o</span>
        <span className="text-[#fbbc05]">o</span>
        <span className="text-[#4285f4]">g</span>
        <span className="text-[#34a853]">l</span>
        <span className="text-[#ea4335]">e</span>
      </div>
      <div className="absolute bottom-0 right-0 flex h-[14px] items-center bg-[#f5f5f5]/70 text-[10px] leading-[14px] text-black">
        <span className="w-[99px] pl-[6px] whitespace-nowrap">Keyboard shortcuts</span>
        <span className="w-[120px] border-l border-[#c8d8ce] pl-[5px] whitespace-nowrap">Map data ©2023 Google</span>
        <span className="w-[71px] border-l border-[#c8d8ce] pl-[5px] whitespace-nowrap">Terms of Use</span>
        <span className="w-[96px] border-l border-[#c8d8ce] pl-[5px] whitespace-nowrap">Report a map error</span>
      </div>
    </section>
  );
}

/* ---------- page ---------- */

function Navbar() {
  return (
    <nav className="flex h-[50px] items-start bg-[#26292e] pl-2 pr-3 pt-[3px]">
      <a className="flex h-[38px] w-[87px] items-center text-[20px] tracking-[-0.95px] text-white">Navbar</a>
      <a className="flex h-[38px] w-[59px] items-center tracking-[-0.33px] text-white">Home</a>
      <a className="flex h-[38px] w-[60px] items-center tracking-[-0.33px] text-[#a3a5a7]">About</a>
      <a className="flex h-[38px] items-center tracking-[-0.34px] text-[#a3a5a7]">Transportation</a>
      <form className="ml-auto flex gap-2">
        <input
          type="search"
          placeholder="Search"
          className="h-[38px] w-[201px] rounded-md border border-[#3d4247] bg-white px-3 tracking-[-0.33px] placeholder:text-[#b5bcc3]"
        />
        <button type="button" className="h-[38px] w-[77px] rounded-md border border-[#087f4e] tracking-[-0.33px] text-[#087f4e]">
          Search
        </button>
      </form>
    </nav>
  );
}

function TripDetails() {
  return (
    <section className="mt-2 flex h-[420px] flex-1 flex-col border border-r-0 border-[#212529] pl-1 pt-[3px] tracking-[-0.35px] text-[#212529]">
      <div className="flex h-[26px] items-center gap-1">
        <BsGeoAltFill className="mt-[3px] size-[25px] text-[#0000ff]" />
        <span>Souce: New Delhi</span>
      </div>
      <div className="flex h-[26px] items-center gap-1">
        <BsGeoAlt className="mt-[3px] size-[25px] text-[#008020]" />
        <span>Destination: Kurukshetra</span>
      </div>
      <div className="flex h-[27px] items-center gap-1 tracking-[-0.3px]">
        <BsSignStop className="mt-[3px] size-[25px] text-black" />
        <span>Other Stopping Details: Karnal,Panipat</span>
      </div>
      <div className="mt-px flex h-6 items-center gap-1">
        <BsClockHistory className="mt-[4px] size-4 text-[#008020]" />
        <span>Departure: 03/23/2023 3:58 PM</span>
      </div>
      <div className="flex h-6 items-center gap-1">
        <BsClockFill className="mt-[4px] size-4 text-[#ff0018]" />
        <span>Arrival(Expected): 03/23/2023 3:58 PM</span>
      </div>
      <div className="flex h-[26px] items-center">
        <BsTruckFlatbed className="size-[25px] text-[#0000ff]" />
      </div>
      <div className="flex h-6 items-center">Vehicle details: Mahindra Pick Up van, model 121</div>
      <div className="flex h-6 items-center">Vehicle Capacity: 1200kg</div>
    </section>
  );
}

export default function App() {
  return (
    <div className="relative h-[872px] w-[1496px] overflow-hidden bg-white font-[Inter,sans-serif] text-[16px] leading-6">
      <Navbar />
      <main className="flex">
        <div className="w-[766px] pl-[6px] pt-[18px]">
          <RouteMap />
        </div>
        <TripDetails />
      </main>
      <div className="absolute -bottom-10 left-[490px] h-8 w-[846px] shadow-[0_0_44px_4px_rgba(0,0,0,0.3)]" />
      <svg viewBox="0 0 4 8" className="absolute bottom-0 right-0 h-2 w-1" fill="#14222b">
        <path d="M4 0 V8 H0 Q3 5 4 0 Z" />
      </svg>
    </div>
  );
}
